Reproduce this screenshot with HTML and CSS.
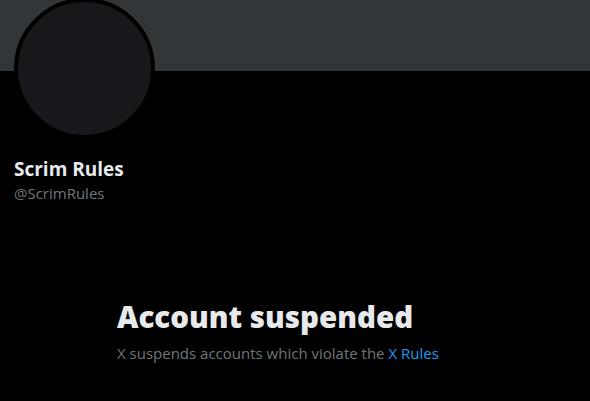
FILE: index.html
```html
<!DOCTYPE html>
<html lang="en">
<head>
    <meta charset="UTF-8">
    <title>Scrim Rules</title>
    <link rel="stylesheet" href="styles.css">
</head>
<body>
    <div class="banner"></div>
    <div class="profile">
        <div class="avatar"></div>
        <div class="name">Scrim Rules</div>
        <div class="handle">@ScrimRules</div>
    </div>
    <div class="empty">
        <h2>Account suspended</h2>
        <p>X suspends accounts which violate the <a href="#">X Rules</a></p>
    </div>
</body>
</html>
```

FILE: styles.css
```css
body {
    margin: 0;
    background-color: #000;
    color: #e7e9ea;
    font-family: "Open Sans", "Noto Sans", sans-serif;
}

.banner {
    height: 71px;
    background-color: #333639;
}

.profile {
    padding: 0 14px;
}

.avatar {
    width: 133px;
    height: 133px;
    margin-top: -73px;
    border: 4px solid #000;
    border-radius: 50%;
    background-color: #16181c;
}

.name {
    margin-top: 18px;
    font-size: 19px;
    font-weight: 700;
    line-height: 24px;
}

.handle {
    margin-top: 2px;
    font-size: 15px;
    line-height: 20px;
    color: #71767b;
}

.empty {
    max-width: 356px;
    margin: 96px auto 0;
}

.empty h2 {
    margin: 0;
    font-size: 29.5px;
    font-weight: 800;
    line-height: 36px;
}

.empty p {
    margin: 8px 0 0;
    font-size: 15px;
    line-height: 20px;
    color: #71767b;
}

.empty a {
    color: #1d9bf0;
    text-decoration: none;
}
```
